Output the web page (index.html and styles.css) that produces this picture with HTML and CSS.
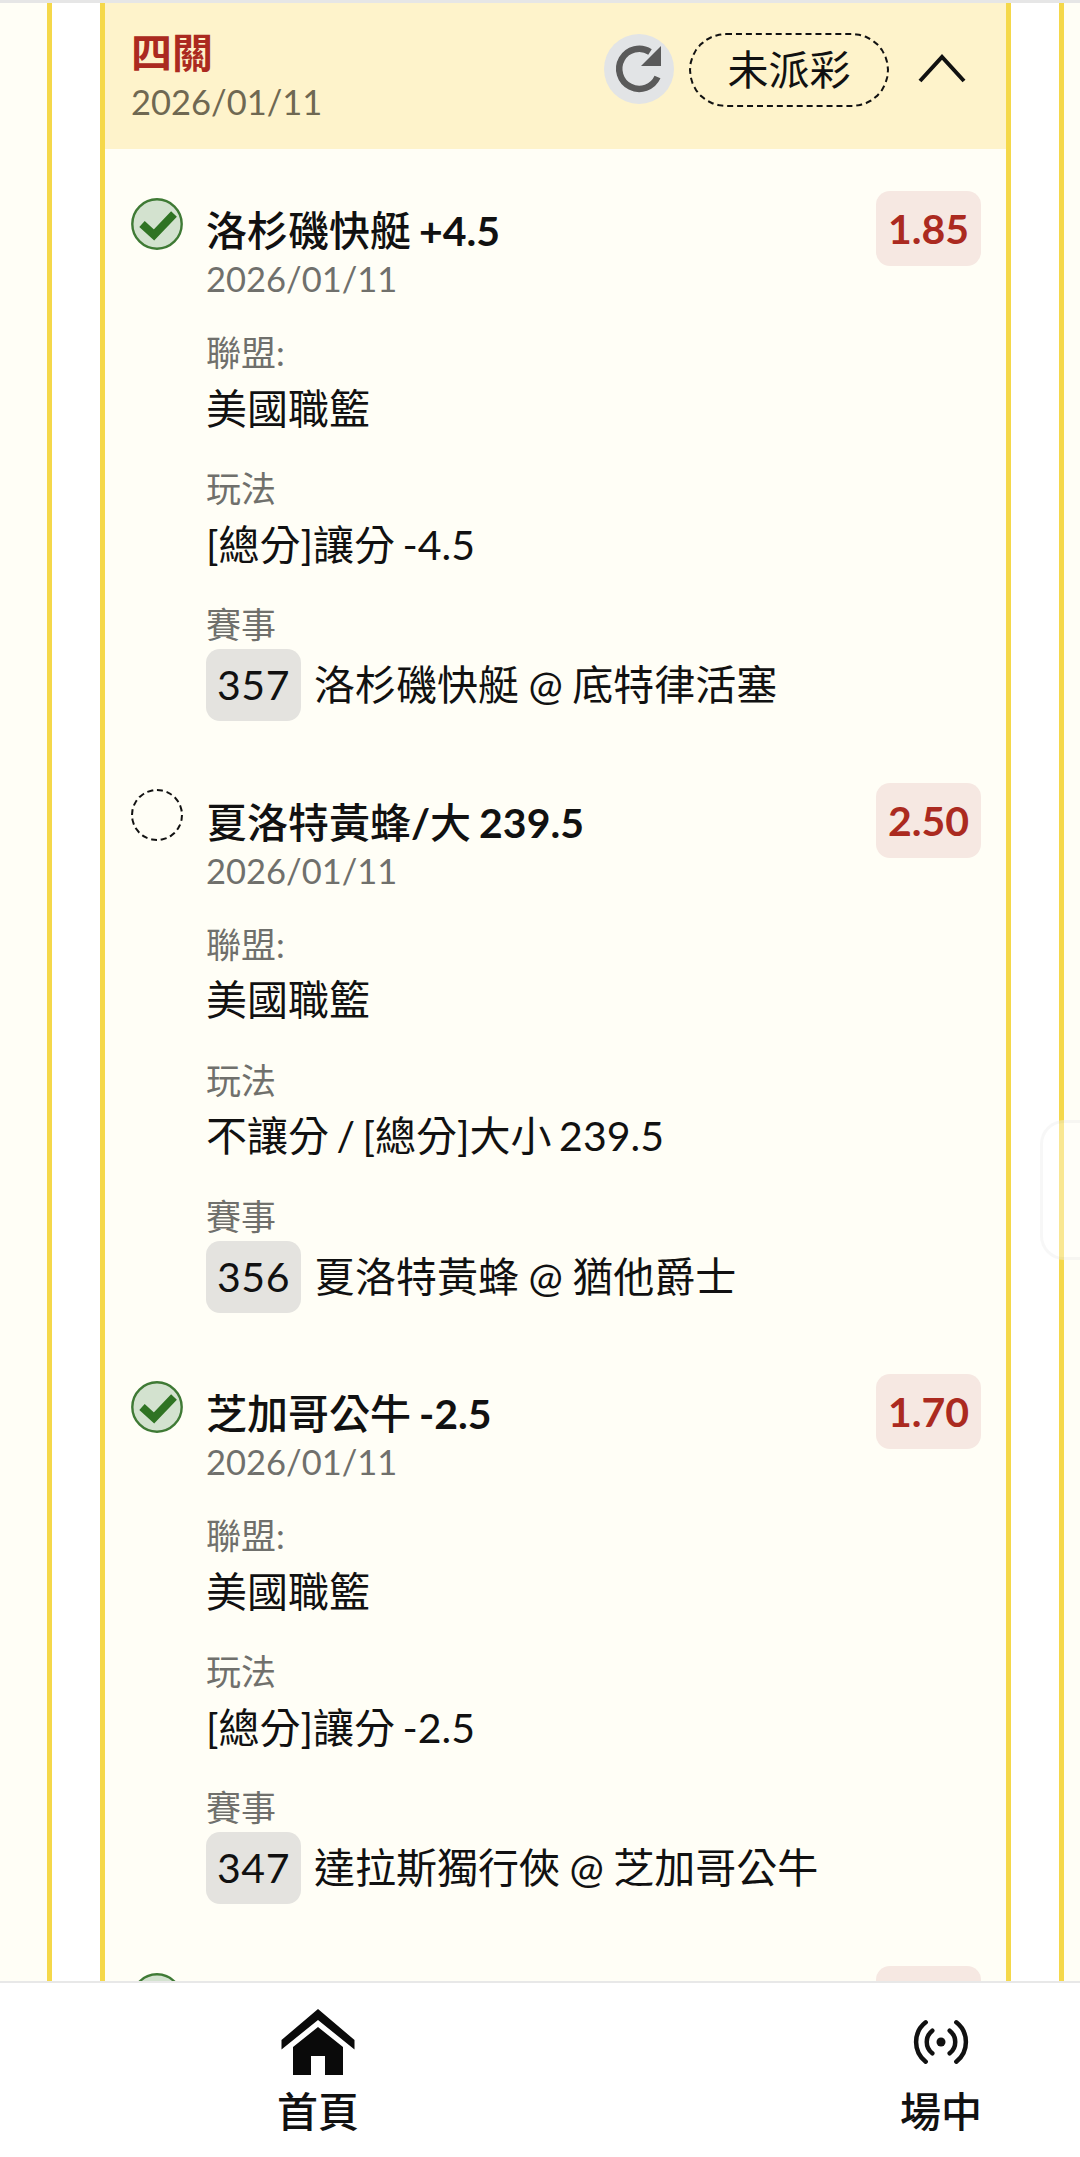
FILE: index.html
```html
<!DOCTYPE html>
<html lang="zh-Hant">
<head>
  <meta charset="UTF-8" />
  <meta name="viewport" content="width=device-width, initial-scale=1.0"/>
  <title>四關</title>
  <link rel="stylesheet" href="styles.css">
</head>
<body>
  <div class="app">
    <main class="carousel">
      <div class="side-card side-prev"></div>

      <section class="card">
        <header class="card-head">
          <div class="head-title">
            <h1>四關</h1>
            <div class="head-date">2026/01/11</div>
          </div>
          <button class="refresh" type="button" aria-label="refresh">
            <svg viewBox="0 0 70 70" width="70" height="70">
              <path d="M46 18A20 20 0 1 0 53.500 43" fill="none" stroke="#5a5a5a" stroke-width="6.500"/>
              <path d="M57 12V32H37Z" fill="#5a5a5a"/>
            </svg>
          </button>
          <div class="status-pill">未派彩</div>
          <svg class="chevron" viewBox="0 0 48 32" width="48" height="32">
            <path d="M2 29L24 5L46 29" fill="none" stroke="#111" stroke-width="4"/>
          </svg>
        </header>

        <div class="card-body">
          <!-- leg 1 -->
          <article class="leg">
            <div class="mark mark-won">
              <svg viewBox="0 0 52 52" width="52" height="52">
                <circle cx="26" cy="26" r="24.7" fill="#d3e2cf" stroke="#3f7a35" stroke-width="2.4"/>
                <path d="M11 26L23 37L43 16" fill="none" stroke="#2f7323" stroke-width="8"/>
              </svg>
            </div>
            <div class="leg-main">
              <h2><span class="zh">洛杉磯快艇</span> +4.5</h2>
              <div class="leg-date">2026/01/11</div>
              <div class="field-label first">聯盟:</div>
              <div class="field-value">美國職籃</div>
              <div class="field-label">玩法</div>
              <div class="field-value">[總分]讓分 -4.5</div>
              <div class="field-label">賽事</div>
              <div class="match"><span class="match-no">357</span>洛杉磯快艇 @ 底特律活塞</div>
            </div>
            <div class="odds">1.85</div>
          </article>

          <!-- leg 2 -->
          <article class="leg">
            <div class="mark mark-pending"></div>
            <div class="leg-main">
              <h2><span class="zh">夏洛特黃蜂</span>/<span class="zh">大</span> 239.5</h2>
              <div class="leg-date">2026/01/11</div>
              <div class="field-label first">聯盟:</div>
              <div class="field-value">美國職籃</div>
              <div class="field-label">玩法</div>
              <div class="field-value">不讓分 / [總分]大小 239.5</div>
              <div class="field-label">賽事</div>
              <div class="match"><span class="match-no">356</span>夏洛特黃蜂 @ 猶他爵士</div>
            </div>
            <div class="odds">2.50</div>
          </article>

          <!-- leg 3 -->
          <article class="leg">
            <div class="mark mark-won">
              <svg viewBox="0 0 52 52" width="52" height="52">
                <circle cx="26" cy="26" r="24.7" fill="#d3e2cf" stroke="#3f7a35" stroke-width="2.4"/>
                <path d="M11 26L23 37L43 16" fill="none" stroke="#2f7323" stroke-width="8"/>
              </svg>
            </div>
            <div class="leg-main">
              <h2><span class="zh">芝加哥公牛</span> -2.5</h2>
              <div class="leg-date">2026/01/11</div>
              <div class="field-label first">聯盟:</div>
              <div class="field-value">美國職籃</div>
              <div class="field-label">玩法</div>
              <div class="field-value">[總分]讓分 -2.5</div>
              <div class="field-label">賽事</div>
              <div class="match"><span class="match-no">347</span>達拉斯獨行俠 @ 芝加哥公牛</div>
            </div>
            <div class="odds">1.70</div>
          </article>

          <!-- leg 4, only its top edge shows above the tab bar -->
          <article class="leg">
            <div class="mark mark-won">
              <svg viewBox="0 0 52 52" width="52" height="52">
                <circle cx="26" cy="26" r="24.7" fill="#d3e2cf" stroke="#3f7a35" stroke-width="2.4"/>
              </svg>
            </div>
            <div class="leg-main"></div>
            <div class="odds"></div>
          </article>
        </div>
      </section>

      <div class="side-card side-next"></div>
      <div class="float-tab"></div>
    </main>

    <nav class="tabbar">
      <a class="tab tab-home">
        <svg viewBox="0 0 74 66" width="74" height="66">
          <path d="M37 0L73.500 31V40.500L37 11L0.500 40.500V31Z" fill="#0a0a0a"/>
          <path d="M37 18L62 38V66H44V47H30V66H12V38Z" fill="#0a0a0a"/>
        </svg>
        <span>首頁</span>
      </a>
      <a class="tab tab-live">
        <svg viewBox="0 0 56 66" width="56" height="66">
          <circle cx="28" cy="33" r="4.500" fill="#111"/>
          <g fill="none" stroke="#111" stroke-width="4.500" stroke-linecap="round">
            <path d="M19.300 21.700A14.300 14.300 0 0 0 19.300 44.300"/>
            <path d="M36.700 21.700A14.300 14.300 0 0 1 36.700 44.300"/>
            <path d="M12.700 13.300A25 25 0 0 0 12.700 52.700"/>
            <path d="M43.300 13.300A25 25 0 0 1 43.300 52.700"/>
          </g>
        </svg>
        <span>場中</span>
      </a>
    </nav>
  </div>
</body>
</html>
```

FILE: styles.css
```css
html, body {
  height: 100%;
  margin: 0;
  padding: 0;
  overflow: hidden;
}

body {
  font-family: Lato, 'Noto Sans CJK TC', sans-serif;
  background: #fff;
  color: #111;
}

.app {
  height: 100%;
  display: flex;
  flex-direction: column;
}

.carousel {
  flex: 1;
  min-height: 0;
  position: relative;
  display: flex;
  justify-content: space-between;
  overflow: hidden;
  border-top: 3px solid #e6e6e6;
}

.side-card {
  background: #fffef6;
}

.side-prev {
  width: 52px;
  border-right: 5px solid #f5d84a;
  box-sizing: border-box;
}

.side-next {
  width: 21px;
  border-left: 5px solid #f5d84a;
  box-sizing: border-box;
}

.card {
  width: 911px;
  box-sizing: border-box;
  background: #fffef6;
  border-left: 5px solid #f5d84a;
  border-right: 5px solid #f5d84a;
}

.card-head {
  height: 146px;
  box-sizing: border-box;
  padding: 0 40px 0 26px;
  display: flex;
  align-items: flex-start;
  background: #fef3cb;
}

.head-title {
  flex: 1;
  padding-top: 25px;
}

h1 {
  margin: 0;
  font-size: 41px;
  line-height: 50px;
  font-weight: 700;
  color: #ab2a20;
}

.head-date {
  font-size: 34.5px;
  line-height: 48px;
  color: #6f6852;
}

.refresh {
  width: 70px;
  height: 70px;
  margin: 31px 15px 0 0;
  padding: 0;
  border: none;
  border-radius: 50%;
  background: #e2e4e6;
}

.refresh svg {
  display: block;
}

.status-pill {
  width: 200px;
  height: 74px;
  margin: 30px 29px 0 0;
  box-sizing: border-box;
  border: 2px dashed #111;
  border-radius: 37px;
  font-size: 41px;
  line-height: 70px;
  text-align: center;
}

.chevron {
  margin-top: 49px;
}

.card-body {
  padding: 42px 25px 0 26px;
}

.leg {
  display: flex;
  align-items: flex-start;
  height: 591.6px;
}

.mark {
  flex: none;
  width: 52px;
  height: 52px;
  margin: 7px 23px 0 0;
}

.mark svg {
  display: block;
}

.mark-pending {
  box-sizing: border-box;
  border: 2px dashed #111;
  border-radius: 50%;
  margin-top: 6px;
}

.leg-main {
  flex: 1;
  min-width: 0;
}

h2 {
  margin: 14px 0 0;
  font-size: 41px;
  line-height: 52px;
  font-weight: 700;
  word-spacing: -2px;
  color: #111;
}

h2 .zh {
  font-weight: 500;
}

.leg-date {
  font-size: 34.5px;
  line-height: 44px;
  color: #70706c;
}

.field-label {
  margin-top: 31.5px;
  font-size: 35px;
  line-height: 44px;
  color: #70706c;
}

.field-label.first {
  margin-top: 29px;
}

.field-value {
  margin-top: 8.5px;
  font-size: 41px;
  line-height: 52px;
  word-spacing: -3px;
}

.match {
  margin-top: 3px;
  display: flex;
  align-items: center;
  font-size: 41px;
  line-height: 72px;
  word-spacing: -1px;
}

.match-no {
  width: 95px;
  height: 72px;
  margin-right: 13px;
  border-radius: 14px;
  background: #e4e3df;
  text-align: center;
  letter-spacing: 0.5px;
}

.odds {
  flex: none;
  width: 105px;
  height: 75px;
  border-radius: 14px;
  background: #f6e8e2;
  color: #ab2a20;
  font-size: 41px;
  line-height: 75px;
  font-weight: 700;
  text-align: center;
}

/* faint handle on the right edge */
.float-tab {
  position: absolute;
  top: 1117px;
  right: 0;
  width: 40px;
  height: 140px;
  box-sizing: border-box;
  border: 3px solid rgba(0, 0, 0, 0.03);
  border-right: none;
  border-radius: 24px 0 0 24px;
  background: rgba(255, 255, 255, 0.4);
}

.tabbar {
  flex: none;
  height: 176px;
  box-sizing: border-box;
  border-top: 2px solid #e8e8e8;
  background: #fff;
  display: flex;
  justify-content: space-between;
  padding: 26px 93px 0 272px;
}

.tab {
  display: flex;
  flex-direction: column;
  align-items: center;
  width: 92px;
  font-size: 41px;
  line-height: 50px;
  font-weight: 500;
  color: #111;
}

.tab svg {
  display: block;
  margin-bottom: 12px;
}
```
